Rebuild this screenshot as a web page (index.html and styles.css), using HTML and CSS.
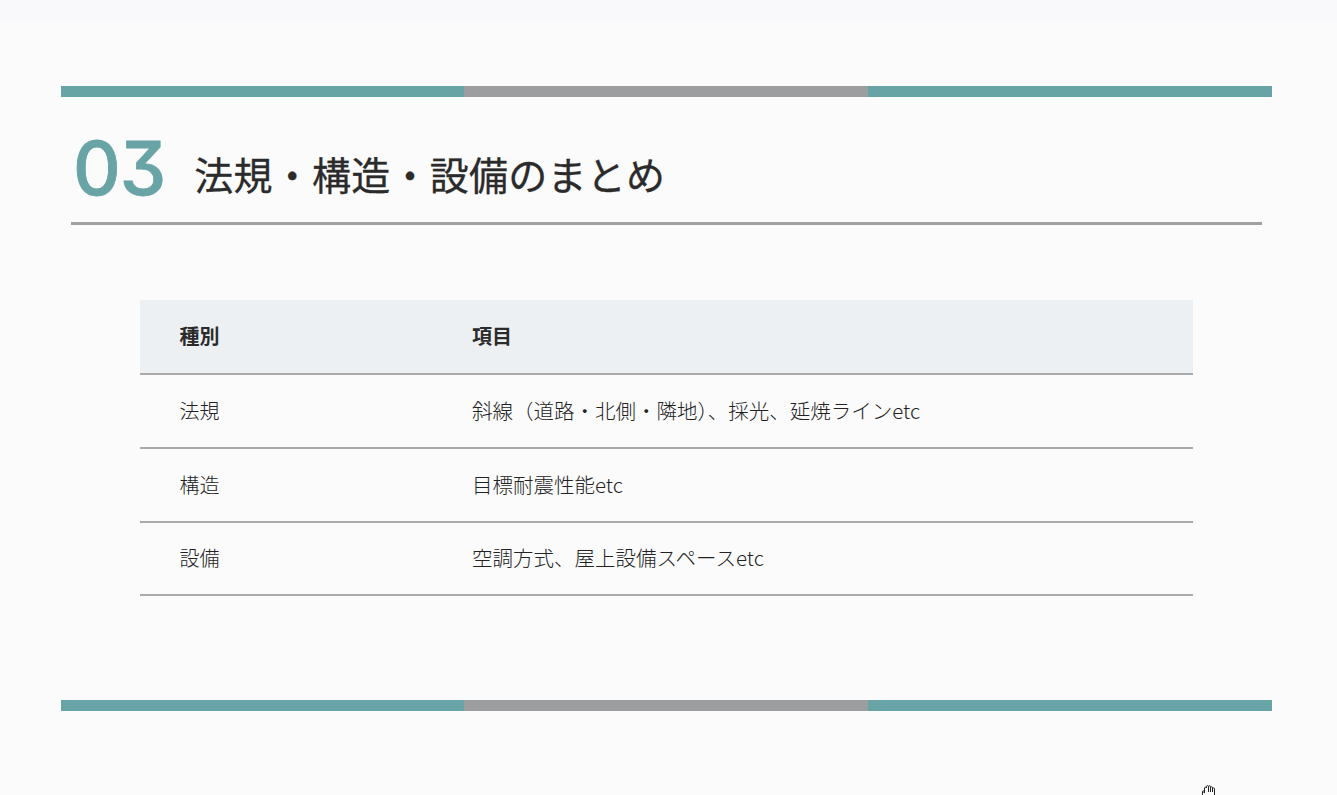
FILE: index.html
```html
<!DOCTYPE html>
<html lang="ja">
<head>
<meta charset="utf-8">
<title>法規・構造・設備のまとめ</title>
<link rel="stylesheet" href="styles.css">
</head>
<body>
<div class="top-strip"></div>
<main class="slide">
  <div class="tribar"><span class="teal"></span><span class="gray"></span><span class="teal"></span></div>
  <header class="heading">
    <span class="num">03</span>
    <h1 class="title">法規・構造・設備のまとめ</h1>
  </header>
  <table class="summary">
    <thead>
      <tr><th class="c1">種別</th><th>項目</th></tr>
    </thead>
    <tbody>
      <tr><td class="c1">法規</td><td>斜線（道路・北側・隣地）、採光、延焼ラインetc</td></tr>
      <tr><td class="c1">構造</td><td>目標耐震性能etc</td></tr>
      <tr><td class="c1 last">設備</td><td class="last">空調方式、屋上設備スペースetc</td></tr>
    </tbody>
  </table>
  <div class="tribar bottom"><span class="teal"></span><span class="gray"></span><span class="teal"></span></div>
</main>
<svg class="cursor" width="16" height="11" viewBox="0 0 16 11" fill="none" stroke="#222" stroke-width="1">
  <path d="M1.5 11V6.5C1.5 5.5 3 5.5 3 6.5V8M3.5 8V3C3.5 2 5.5 2 5.5 3V1.5C5.5 .3 7.5 .3 7.5 1.5V7M7.5 1.5C7.5 .5 9.5 .5 9.5 1.5V7M9.5 2.5C9.5 1.5 11.5 1.5 11.5 2.5V7M11.5 3.5C11.5 2.7 13.5 2.7 13.5 3.5V11"/>
</svg>
</body>
</html>
```
FILE: styles.css
```css
* { box-sizing: border-box; }
html, body { margin: 0; height: 795px; overflow: hidden; }
body {
  position: relative;
  background: #fbfbfc;
  color: #2b2b2b;
  font-family: "Noto Sans CJK JP", "Noto Sans", sans-serif;
}
.top-strip { height: 20px; background: #f9f8fb; }
.slide { padding: 66px 65px 0 61px; }
.tribar { display: grid; grid-template-columns: 403px 404px 404px; height: 11px; }
.teal { background: #68a4a6; }
.gray { background: #9b9d9f; }
.tribar.bottom { margin-top: 104px; }
.heading {
  display: flex;
  align-items: flex-end;
  gap: 29px;
  height: 128px;
  margin: 0 10px;
  padding-left: 2px;
  border-bottom: 3px solid #a0a1a3;
}
.num {
  font-family: "Inter", sans-serif;
  font-feature-settings: "cv09";
  font-size: 74px;
  font-weight: 500;
  -webkit-text-stroke: .8px #68a4a6;
  letter-spacing: -1px;
  line-height: 1;
  color: #68a4a6;
  padding-bottom: 17px;
}
.title {
  margin: 0;
  font-size: 39px;
  font-weight: 400;
  -webkit-text-stroke: .3px #2b2b2b;
  letter-spacing: .25px;
  line-height: 1;
  color: #2b2b2b;
  padding-bottom: 29px;
}
.summary {
  width: 1053px;
  margin: 75px 0 0 78.5px;
  border-collapse: collapse;
  font-size: 20.5px;
}
.summary th, .summary td {
  height: 74px;
  padding: 0 0 2px 40px;
  text-align: left;
  vertical-align: middle;
  border-bottom: 2px solid #aaaaaa;
  font-weight: 300;
  line-height: 1.2;
  color: #222;
}
.summary th {
  font-size: 20px;
  font-weight: 700;
  color: #2b2b2b;
  background: #edf0f3;
}
.summary .c1 { width: 292.5px; font-size: 20px; }
.summary td.c1 { padding-bottom: 1px; }
.summary .last { height: 73px; }
.cursor { position: absolute; left: 1201px; top: 785px; }
```
